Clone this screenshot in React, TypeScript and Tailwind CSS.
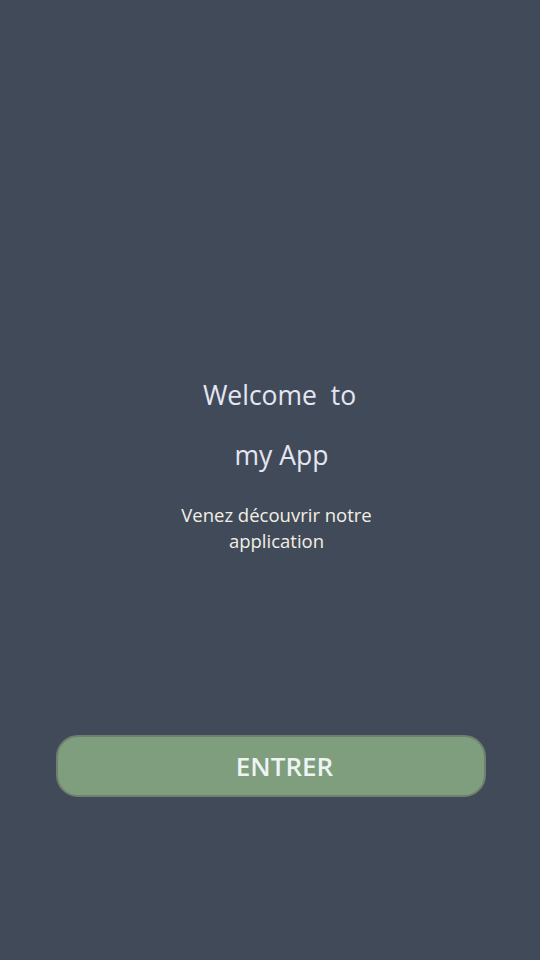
import React from "react";

export default function App() {
  return (
    <div
      className="w-[540px] h-[960px] bg-[#414a59] flex flex-col items-center"
      style={{ fontFamily: '"Open Sans", "Noto Sans", sans-serif' }}
    >
      <div className="mt-[365px] w-full pl-[15px] flex flex-col items-center text-[#e4e6f2] text-[26.5px] leading-[60px]">
        <div className="whitespace-pre pl-[4px]">Welcome  to</div>
        <div className="pl-[8px]">my App</div>
      </div>
      <div className="mt-[17px] w-full pl-[13px] flex justify-center">
        <div className="w-[216px] text-center text-[#f2efe4] text-[18.5px] leading-[26px]">
          Venez découvrir notre application
        </div>
      </div>
      <button className="mt-[181px] w-[430px] h-[62px] ml-[1px] rounded-[22px] bg-[#7e9e7e] border-2 border-[#6f7f70] flex items-center justify-center">
        <span className="pl-[28px] text-[#eef3f4] text-[26px] font-semibold">ENTRER</span>
      </button>
    </div>
  );
}
